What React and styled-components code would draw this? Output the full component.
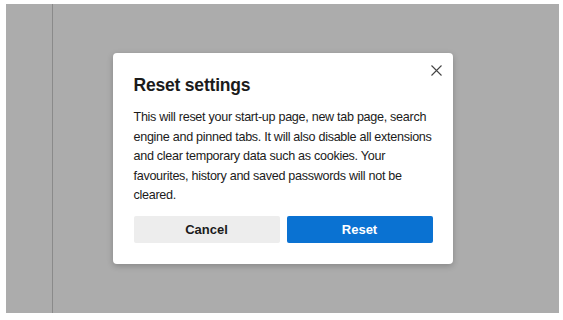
import React from "react";
import styled, { createGlobalStyle } from "styled-components";

const Global = createGlobalStyle`
  html, body { margin: 0; padding: 0; background: #ffffff; }
  body { font-family: "Liberation Sans", Arial, sans-serif; }
`;

const Backdrop = styled.div`
  position: relative;
  margin: 4px 4px 7px 6px;
  height: 309px;
  background: #acacac;
  display: flex;
`;

const SidePanel = styled.div`
  width: 46px;
  border-right: 1px solid #8a8a8a;
`;

const Overlay = styled.div`
  position: absolute;
  inset: 0;
  display: flex;
  align-items: center;
  justify-content: center;
`;

const Dialog = styled.div`
  position: relative;
  width: 340px;
  box-sizing: border-box;
  padding: 20px 20px 21px 21px;
  background: #ffffff;
  border-radius: 4px;
  box-shadow: 0 2px 6px rgba(0, 0, 0, 0.22);
  color: #1b1b1b;
`;

const Title = styled.h2`
  margin: 0 0 11px;
  font-size: 17.5px;
  line-height: 24px;
  font-weight: 700;
  letter-spacing: -0.2px;
`;

const Body = styled.p`
  margin: 0 0 10px;
  font-size: 12.6px;
  line-height: 19.4px;
  letter-spacing: -0.3px;
`;

const Close = styled.button`
  position: absolute;
  top: 8px;
  right: 7px;
  width: 18px;
  height: 18px;
  padding: 0;
  border: 0;
  background: none;
  display: flex;
  align-items: center;
  justify-content: center;
  color: #444;
`;

const Actions = styled.div`
  display: grid;
  grid-template-columns: 1fr 1fr;
  gap: 7px;
`;

const Button = styled.button`
  height: 27px;
  border: 0;
  border-radius: 2px;
  font-family: "Liberation Sans", Arial, sans-serif;
  font-size: 13px;
  font-weight: 700;
  background: ${(p) => (p.$primary ? "#0a72d2" : "#ededed")};
  color: ${(p) => (p.$primary ? "#ffffff" : "#1b1b1b")};
`;

export default function App() {
  return (
    <>
      <Global />
      <Backdrop>
        <SidePanel />
        <Overlay>
          <Dialog>
            <Close aria-label="Close">
              <svg width="11" height="11" viewBox="0 0 11 11">
                <path d="M0.5 0.5 L10.5 10.5 M10.5 0.5 L0.5 10.5" stroke="currentColor" strokeWidth="1.1" />
              </svg>
            </Close>
            <Title>Reset settings</Title>
            <Body>
              This will reset your start-up page, new tab page, search engine and pinned tabs. It will also
              disable all extensions and clear temporary data such as cookies. Your favourites, history and
              saved passwords will not be cleared.
            </Body>
            <Actions>
              <Button>Cancel</Button>
              <Button $primary>Reset</Button>
            </Actions>
          </Dialog>
        </Overlay>
      </Backdrop>
    </>
  );
}
